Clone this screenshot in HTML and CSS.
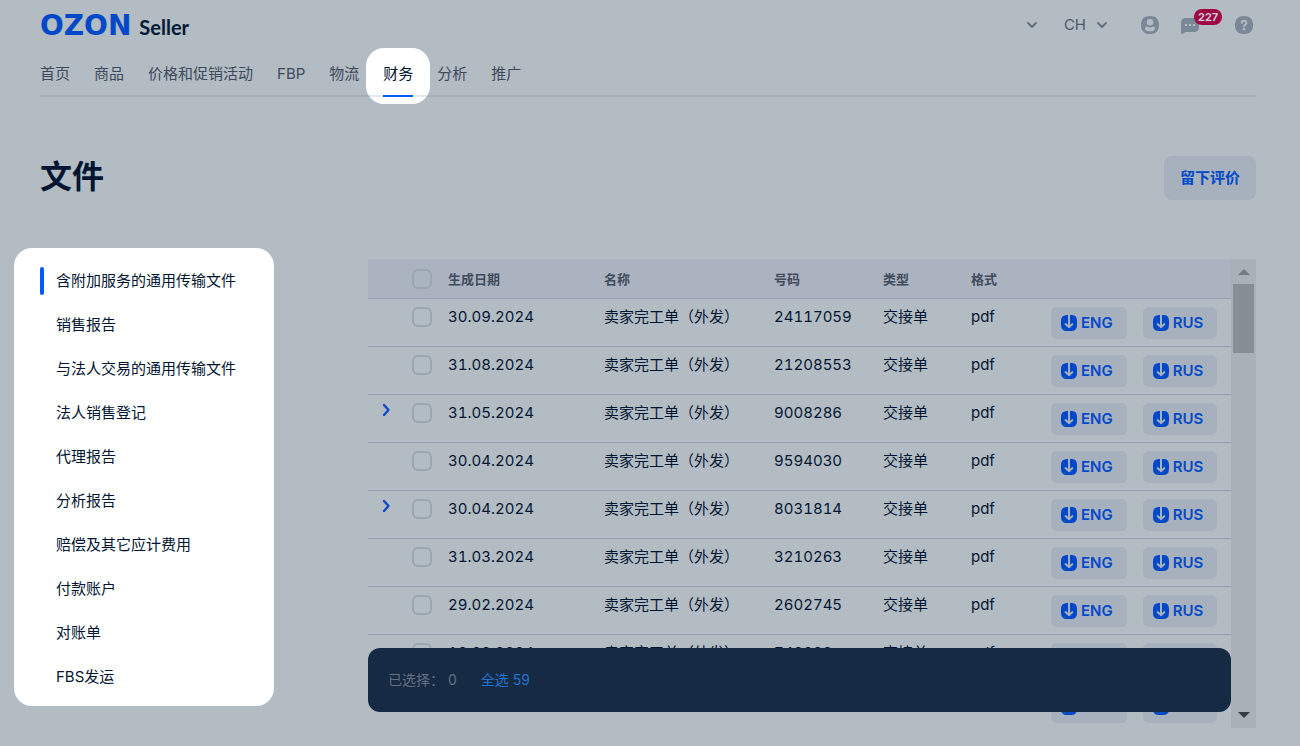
FILE: index.html
```html
<!DOCTYPE html>
<html lang="zh">
<head>
<meta charset="utf-8">
<meta name="viewport" content="width=device-width, initial-scale=1">
<title>文件 – OZON Seller</title>
<link rel="stylesheet" href="styles.css">
</head>
<body>
<svg class="defs" aria-hidden="true">
  <symbol id="down" viewBox="0 0 12 12"><path d="M2 4l4 4 4-4" fill="none" stroke="currentColor" stroke-width="2" stroke-linecap="round" stroke-linejoin="round"/></symbol>
  <symbol id="right" viewBox="0 0 12 14"><path d="M4 2l4.500 5L4 12" fill="none" stroke="currentColor" stroke-width="2.200" stroke-linecap="round" stroke-linejoin="round"/></symbol>
  <symbol id="load" viewBox="0 0 16 16"><path d="M6 0h1v10L5.200 8.200a1 1 0 0 0-1.300 1.500l3 2.900a1.500 1.500 0 0 0 2.200 0l3-2.900a1 1 0 0 0-1.300-1.500L9 10V0h2q5 0 5 6v4q0 6-6 6H6q-6 0-6-6V6q0-6 6-6z" fill="currentColor"/></symbol>
</svg>

<header class="header">
  <div class="topbar">
    <a class="logo" href="#"><span class="logo-main">OZON</span><span class="logo-sub">Seller</span></a>
    <div class="tools">
      <button class="tool company" type="button" aria-label="公司"><svg class="chev"><use href="#down"/></svg></button>
      <button class="tool lang" type="button">CH<svg class="chev"><use href="#down"/></svg></button>
      <button class="tool user" type="button" aria-label="账户">
        <svg class="icon" viewBox="0 0 18 18"><path fill="currentColor" fill-rule="evenodd" d="M9 0C14.800 0 18 3.200 18 9s-3.200 9-9 9-9-3.200-9-9 3.200-9 9-9zm0 3a3.300 3.300 0 1 0 0 6.600A3.300 3.300 0 0 0 9 3zM4 12.500C4 14.500 6 15.300 9 15.300s5-.8 5-2.800c0-1-.8-1.900-1.800-1.900-.8 0-1.500.9-3.200.9s-2.400-.9-3.200-.9c-1 0-1.800.9-1.800 1.900z"/></svg>
      </button>
      <button class="tool chat" type="button" aria-label="消息">
        <svg class="icon" viewBox="0 0 18 18"><path fill="currentColor" fill-rule="evenodd" d="M5 2h8q5 0 5 5v4q0 5-5 5H5q-1.500 0-2.600 1.500Q1.500 18.500.5 17.600 0 17 0 16V7q0-5 5-5zM4 8v2h2V8zm4 0v2h2V8zm4 0v2h2V8z"/></svg>
        <span class="badge">227</span>
      </button>
      <button class="tool help" type="button" aria-label="帮助">
        <svg class="icon" viewBox="0 0 18 18"><path fill="currentColor" d="M9 0C14.800 0 18 3.200 18 9s-3.200 9-9 9-9-3.200-9-9 3.200-9 9-9z"/><path d="M6.800 6.900C6.800 3.900 11.300 4 11.300 6.900 11.300 8.800 9 8.600 9 10.600" fill="none" stroke="#b3bbc3" stroke-width="1.800" stroke-linecap="round"/><circle cx="9" cy="13.300" r="1.200" fill="#b3bbc3"/></svg>
      </button>
    </div>
  </div>
  <nav class="nav">
    <a href="#">首页</a><a href="#">商品</a><a href="#">价格和促销活动</a><a href="#">FBP</a><a href="#">物流</a><a class="active" href="#">财务</a><a href="#">分析</a><a href="#">推广</a>
  </nav>
</header>

<div class="title-row">
  <h1>文件</h1>
  <button class="feedback" type="button">留下评价</button>
</div>

<main class="content">
  <nav class="side">
    <a class="current" href="#">含附加服务的通用传输文件</a>
    <a href="#">销售报告</a>
    <a href="#">与法人交易的通用传输文件</a>
    <a href="#">法人销售登记</a>
    <a href="#">代理报告</a>
    <a href="#">分析报告</a>
    <a href="#">赔偿及其它应计费用</a>
    <a href="#">付款账户</a>
    <a href="#">对账单</a>
    <a href="#">FBS发运</a>
  </nav>

  <section class="panel">
    <div class="viewport">
      <table class="docs">
        <colgroup><col class="c-open"><col class="c-check"><col class="c-date"><col class="c-name"><col class="c-num"><col class="c-type"><col class="c-fmt"><col class="c-load"></colgroup>
        <thead>
          <tr><th></th><th><input type="checkbox" aria-label="全选"></th><th>生成日期</th><th>名称</th><th>号码</th><th>类型</th><th>格式</th><th></th></tr>
        </thead>
        <tbody id="rows"></tbody>
      </table>
      <div class="selection">
        <span>已选择： 0</span>
        <a href="#">全选 59</a>
      </div>
    </div>
    <div class="scroll" aria-hidden="true">
      <span class="arrow up"></span>
      <span class="thumb"></span>
      <span class="arrow dn"></span>
    </div>
  </section>
</main>
<script src="rows.js"></script>
</body>
</html>
```
FILE: rows.js
```js
const docs = [
  ["30.09.2024", "24117059"],
  ["31.08.2024", "21208553"],
  ["31.05.2024", "9008286", true],
  ["30.04.2024", "9594030"],
  ["30.04.2024", "8031814", true],
  ["31.03.2024", "3210263"],
  ["29.02.2024", "2602745"],
  ["18.02.2024", "748233"],
  ["31.01.2024", "702318"]
];
const button = (label) =>
  `<button class="load" type="button"><svg><use href="#load"/></svg>${label}</button>`;
document.getElementById("rows").innerHTML = docs.map(([date, number, open]) => `<tr>
  <td>${open ? '<button class="open" type="button" aria-label="展开"><svg><use href="#right"/></svg></button>' : ""}</td>
  <td><input type="checkbox" aria-label="${date}"></td>
  <td>${date}</td><td>卖家完工单（外发）</td><td>${number}</td><td>交接单</td><td>pdf</td>
  <td><div class="loads">${button("ENG")}${button("RUS")}</div></td>
</tr>`).join("");
```
FILE: styles.css
```css
* { box-sizing: border-box; }

body {
  margin: 0;
  height: 100vh;
  display: flex;
  flex-direction: column;
  background: #b3bbc3;
  color: #021632;
  font: 15px/20px Inter, "Noto Sans CJK SC", sans-serif;
  overflow: hidden;
}

a { color: inherit; text-decoration: none; }
button { font: inherit; color: inherit; border: 0; padding: 0; background: none; cursor: pointer; }
.defs { display: none; }

.header { padding: 0 44px 0 40px; }
.topbar { display: flex; justify-content: space-between; height: 48px; }
.logo { display: flex; align-items: baseline; gap: 8px; line-height: 52px; }
.logo-main { font-family: "DejaVu Sans", sans-serif; font-weight: 700; font-size: 28px; color: #0048c8; }
.logo-sub { font-family: Lato, sans-serif; font-weight: 700; font-size: 20px; color: #021a35; }

.tools { display: flex; align-items: center; padding: 2px 3px 0 0; color: #7a8796; }
.tool { display: flex; align-items: center; position: relative; }
.chev { width: 12px; height: 12px; color: #627183; }
.icon { width: 18px; height: 18px; }
.company { margin-right: 26px; }
.lang { gap: 10px; margin-right: 33px; color: #4b5a6d; }
.user { margin-right: 22px; }
.chat { margin-right: 36px; }
.badge {
  position: absolute;
  left: 13px;
  top: -7px;
  height: 16px;
  padding: 0 4px;
  border-radius: 8px;
  background: #9e0542;
  color: #c8ced6;
  font-size: 11px;
  font-weight: 700;
  line-height: 16px;
}

.nav { display: flex; gap: 24px; height: 49px; border-bottom: 2px solid #a1afbb; color: #3d4a5b; position: relative; z-index: 0; }
.nav a { line-height: 51px; }
.nav .active { position: relative; color: #021632; }
.nav .active::before,
.nav .active::after { content: ""; position: absolute; }
.nav .active::before {
  z-index: -1;
  inset: 0 -17px -9px;
  border-radius: 18px;
  background: linear-gradient(#e3e9ef, #e3e9ef) 0 47px / 100% 2px no-repeat #fff;
}
.nav .active::after { left: 0; right: 0; bottom: -2px; height: 2px; background: #005bff; }

.title-row { display: flex; align-items: center; justify-content: space-between; padding: 58px 44px 49px 40px; }
h1 { margin: 0; font-size: 32px; line-height: 44px; padding-bottom: 2px; font-weight: 700; }
.feedback { height: 44px; padding: 0 16px; border-radius: 8px; background: #a6b1bd; color: #0048c8; font-weight: 700; }
.title-row { padding-bottom: 47px; }

.content { flex: 1; min-height: 0; display: flex; align-items: flex-start; gap: 94px; padding: 0 44px 18px 14px; }
.side { flex: 0 0 260px; padding: 11px 26px 7px; border-radius: 18px; background: #fff; }
.side a { display: block; padding: 8px 0 8px 12px; line-height: 28px; white-space: nowrap; border: 0; position: relative; margin-left: 4px; }
.side .current::before { content: ""; position: absolute; left: -4px; top: 8px; width: 4px; height: 28px; border-radius: 2px; background: #005bff; }

.panel { flex: 1; align-self: stretch; margin-top: 11px; display: flex; min-width: 0; }
.viewport { flex: 1; position: relative; overflow: hidden; }
.docs { width: 100%; table-layout: fixed; border-collapse: separate; border-spacing: 0; }
.c-open { width: 44px; }
.c-check { width: 36px; }
.c-date { width: 156px; }
.c-name { width: 170px; }
.c-num { width: 109px; }
.c-type { width: 88px; }
.c-fmt { width: 80px; }
.c-load { width: 180px; }
.docs th, .docs td { padding: 0; text-align: left; border-bottom: 1px solid #92a2b2; white-space: nowrap; }
.docs th { height: 40px; background: #acb3c0; color: #3f4c5e; font-size: 13px; font-weight: 700; }
.docs td { height: 48px; padding-top: 8px; vertical-align: top; font-variant-numeric: tabular-nums; }
input[type="checkbox"] { appearance: none; display: block; width: 20px; height: 20px; margin: 0; border: 2px solid #98a6b4; border-radius: 6px; }
.open { display: block; width: 12px; height: 14px; margin: -2px 0 0 12px; color: #0048c8; }
.docs .open { margin-top: 0; transform: none; }
.open svg { display: block; width: 12px; height: 14px; }
.loads { display: flex; gap: 16px; }
.load { display: flex; align-items: center; gap: 4px; height: 32px; padding: 0 14px 0 10px; border-radius: 6px; background: #a6b1bd; color: #0048c8; font-weight: 600; }
.load svg { width: 16px; height: 16px; }

.selection {
  position: absolute;
  left: 0;
  right: 0;
  bottom: 16px;
  height: 64px;
  padding: 0 20px;
  display: flex;
  align-items: center;
  gap: 24px;
  border-radius: 12px;
  background: #172a43;
  color: #637080;
  font-size: 14px;
}
.selection a { color: #2272d0; }

.scroll { width: 25px; padding: 10px 0; display: flex; flex-direction: column; align-items: center; background: #a9b0b8; }
.arrow { border: 6px solid transparent; }
.up { border-top: 0; border-bottom-color: #737b83; }
.dn { border-bottom: 0; border-top-color: #343c45; margin-top: auto; }
.thumb { width: 21px; height: 69px; margin-top: 9px; background: #878e96; }
```
